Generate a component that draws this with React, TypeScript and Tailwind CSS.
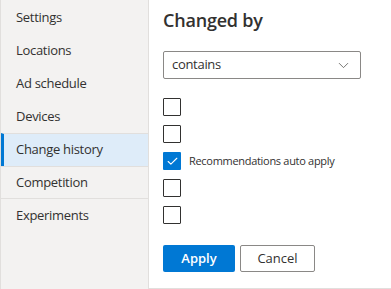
import { ChevronDown, Check } from 'lucide-react';

const navItems = [
  'Settings',
  'Locations',
  'Ad schedule',
  'Devices',
  'Change history',
  'Competition',
  'Experiments',
];

const options = [
  { label: '', checked: false },
  { label: '', checked: false },
  { label: 'Recommendations auto apply', checked: true },
  { label: '', checked: false },
  { label: '', checked: false },
];

export default function App() {
  return (
    <div
      className="flex h-[289px] w-[391px] overflow-hidden bg-white text-[#323130]"
      style={{ fontFamily: '"Open Sans", "Noto Sans", sans-serif' }}
    >
      <nav className="flex w-[149px] shrink-0 flex-col border-l border-r border-[#e1dfdd] bg-[#f3f2f1] pt-px">
        {navItems.map((item) => {
          const active = item === 'Change history';
          const lined = item === 'Change history' || item === 'Competition';
          return (
            <div
              key={item}
              className={
                'flex h-[33px] items-center text-[13px] tracking-[-0.3px] ' +
                (active ? 'border-l-[3px] border-l-[#0078d4] bg-[#deecf9] pl-[12px] ' : 'pl-[15px] ') +
                (lined ? 'border-t border-t-[#e1dfdd] ' : '') +
                (item === 'Competition' ? 'border-b border-b-[#e1dfdd] ' : '')
              }
            >
              {item}
            </div>
          );
        })}
      </nav>

      <main className="flex flex-1 flex-col border-b border-[#e1dfdd] pl-[14px] pt-[7px]">
        <h1 className="text-[18px] font-semibold leading-[26px] tracking-[-0.2px]">
          Changed by
        </h1>

        <div className="mt-[18px] flex h-[28px] w-[198px] items-center justify-between rounded-[2px] border border-[#8a8886] pl-[8px] pr-[8px]">
          <span className="text-[13px] tracking-[-0.3px]">contains</span>
          <ChevronDown size={17} strokeWidth={1.2} className="text-[#605e5c]" />
        </div>

        <div className="mt-[19px] flex flex-col gap-[9px]">
          {options.map((opt, i) => (
            <label key={i} className="flex h-[18px] items-center gap-[8px]">
              {opt.checked ? (
                <span className="flex h-[18px] w-[18px] items-center justify-center rounded-[1px] bg-[#0078d4]">
                  <Check size={13} strokeWidth={2} className="text-white" />
                </span>
              ) : (
                <span className="h-[18px] w-[18px] rounded-[1px] border border-[#323130]" />
              )}
              <span className="text-[11px] tracking-[-0.3px]">{opt.label}</span>
            </label>
          ))}
        </div>

        <div className="mt-[21px] flex gap-[5px]">
          <button className="h-[27px] w-[72px] rounded-[2px] bg-[#0078d4] text-[13px] font-semibold text-white">
            Apply
          </button>
          <button className="h-[27px] w-[75px] rounded-[2px] border border-[#8a8886] bg-white text-[13px]">
            Cancel
          </button>
        </div>
      </main>
    </div>
  );
}
